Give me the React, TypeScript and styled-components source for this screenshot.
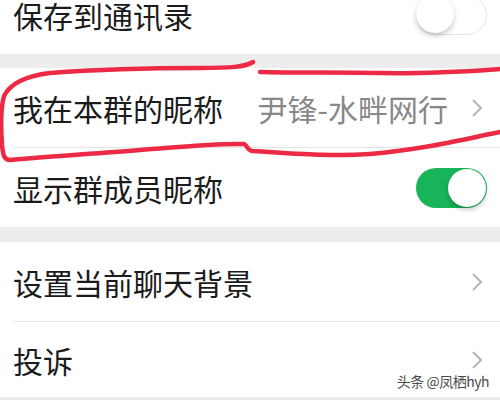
import React from "react";
import styled, { createGlobalStyle } from "styled-components";

const Global = createGlobalStyle`
  html, body { margin: 0; padding: 0; background: #ededed; }
  body { width: 500px; height: 400px; overflow: hidden; font-family: "Noto Sans CJK SC", "Noto Sans", sans-serif; }
`;

const Page = styled.div`
  position: relative;
  width: 500px;
  height: 400px;
  overflow: hidden;
  background: #ededed;
`;

const List = styled.div`
  display: flex;
  flex-direction: column;
  margin-top: -25px;
`;

const Group = styled.div<{ $gap: number }>`
  display: flex;
  flex-direction: column;
  background: #fff;
  margin-bottom: ${(p) => p.$gap}px;
`;

const Row = styled.div<{ $h?: number }>`
  display: flex;
  align-items: center;
  height: ${(p) => p.$h ?? 79}px;
  padding: 0 13px 0 13px;
  box-sizing: border-box;
`;

const Divider = styled.div`
  height: 1px;
  margin-left: 13px;
  background: #e5e5e5;
`;

const Label = styled.span`
  flex: 1;
  font-size: 30px;
  color: #1b1b1b;
  line-height: 1;
  white-space: nowrap;
`;

const Value = styled.span`
  font-size: 30px;
  color: #888;
  line-height: 1;
  white-space: nowrap;
  margin-right: 23px;
`;

const Track = styled.div<{ $on: boolean }>`
  position: relative;
  width: 71px;
  height: 40px;
  border-radius: 20px;
  box-sizing: border-box;
  background: ${(p) => (p.$on ? "#19b35a" : "#fff")};
  border: ${(p) => (p.$on ? "none" : "1.5px solid #e3e3e3")};
`;

const Thumb = styled.div<{ $on: boolean }>`
  position: absolute;
  top: ${(p) => (p.$on ? "1px" : "-1px")};
  ${(p) => (p.$on ? "right: 1px;" : "left: -1px;")}
  width: 38px;
  height: 38px;
  border-radius: 50%;
  background: #fff;
  box-shadow: 0 3px 5px rgba(0, 0, 0, 0.22);
`;

const Chevron = () => (
  <svg width="12" height="20" viewBox="0 0 12 20" style={{ marginRight: 4 }}>
    <path d="M2 2 L10 10 L2 18" fill="none" stroke="#b5b5b5" strokeWidth="2" />
  </svg>
);

const Switch = ({ on }: { on: boolean }) => (
  <Track $on={on}>
    <Thumb $on={on} />
  </Track>
);

const Overlay = styled.svg`
  position: absolute;
  left: 0;
  top: 0;
  pointer-events: none;
`;

const Watermark = styled.div`
  position: absolute;
  right: 11px;
  bottom: 9px;
  font-family: "Noto Sans CJK SC", sans-serif;
  font-size: 14px;
  color: #4a4a4a;
  text-shadow: 0 0 2px #fff;
  letter-spacing: -0.5px;
`;

export default function App() {
  return (
    <Page>
      <Global />
      <List>
        <Group $gap={14}>
          <Row>
            <Label>保存到通讯录</Label>
            <Switch on={false} />
          </Row>
        </Group>
        <Group $gap={15}>
          <Row>
            <Label>我在本群的昵称</Label>
            <Value>尹锋-水畔网行</Value>
            <Chevron />
          </Row>
          <Divider />
          <Row>
            <Label>显示群成员昵称</Label>
            <Switch on={true} />
          </Row>
        </Group>
        <Group $gap={0}>
          <Row>
            <Label>设置当前聊天背景</Label>
            <Chevron />
          </Row>
          <Divider />
          <Row $h={75}>
            <Label>投诉</Label>
            <Chevron />
          </Row>
        </Group>
      </List>
      <Overlay width="500" height="400" viewBox="0 0 500 400">
        <path
          d="M253 62 C245 67 230 68 200 68 C150 68 90 70 50 73 C25 76 10 84 4 96 C0 110 1 130 2 145 C3 155 4 160 10 160 C40 157 90 154 140 150 C180 147 215 143 244 144 C248 146 247 150 252 151 C290 153 330 157 370 154 C420 150 460 140 500 132"
          fill="none"
          stroke="#ec2a45"
          strokeWidth="4.5"
          strokeLinecap="round"
        />
        <path
          d="M260 72 C300 73 340 72 380 73 C430 74 470 71 500 69"
          fill="none"
          stroke="#ec2a45"
          strokeWidth="4.5"
          strokeLinecap="round"
        />
      </Overlay>
      <Watermark>头条 @凤栖hyh</Watermark>
    </Page>
  );
}
